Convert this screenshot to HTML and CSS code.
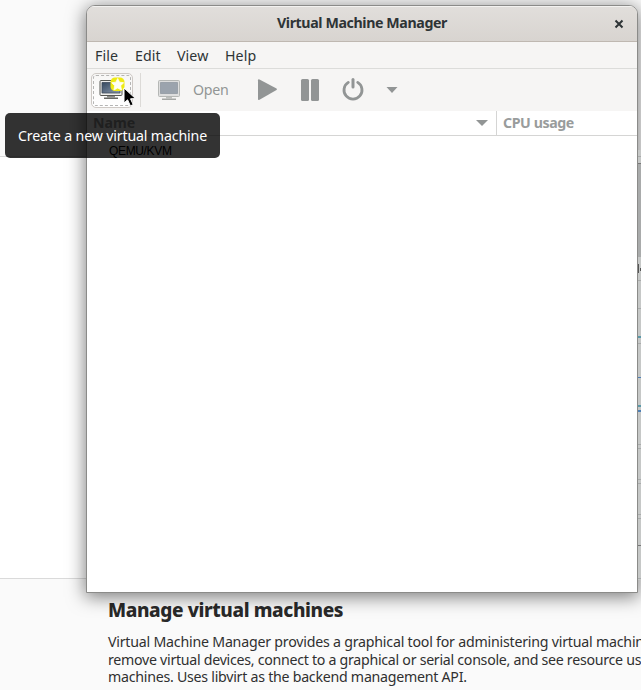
FILE: index.html
```html
<!DOCTYPE html>
<html lang="en">
<head>
<meta charset="utf-8">
<title>Virtual Machine Manager</title>
<link rel="stylesheet" href="styles.css">
</head>
<body>
<main class="page">
  <div class="band top"></div>
  <div class="band middle"></div>
  <section class="details">
    <h1>Manage virtual machines</h1>
    <p><span class="l1">Virtual Machine Manager provides a graphical tool for administering virtual machin</span><br><span class="l2">remove virtual devices, connect to a graphical or serial console, and see resource us</span><br><span class="l3">machines. Uses libvirt as the backend management API.</span></p>
  </section>
</main>
<svg class="behind" width="4" height="430" viewBox="0 0 4 430">
  <path fill="#c6c8c7" d="M0 0h4v430H0z"/>
  <path fill="#a9abab" d="M0 14h4v93H0z"/>
  <path fill="#777" d="M0 13h4v1H0zM0 395h4v1H0z"/>
  <path fill="#a9abab" d="M0 6h4v1H0zM0 130h4v1H0zM0 158h4v1H0zM0 193h4v1H0zM0 294h4v1H0zM0 298h4v1H0zM0 329h4v1H0zM0 333h4v1H0zM0 364h4v1H0zM0 368h4v1H0zM0 428h4v1H0z"/>
  <path fill="#555" d="M0 114h2v9H0zM3 118h1v3H3z"/>
  <path fill="#5b99a8" d="M0 186h4v2H0zM0 255h4v2H0z"/>
  <path fill="#4f80b5" d="M0 227h4v1H0zM0 260h4v2H0z"/>
</svg>
<div class="window">
  <header class="titlebar"><span class="title">Virtual Machine Manager</span>
    <svg class="close" width="10" height="10" viewBox="0 0 10 10"><path d="M1.5 1.5l7 7m0-7l-7 7" stroke="#2e3436" stroke-width="2"/></svg>
  </header>
  <nav class="menu"><span>File</span><span>Edit</span><span>View</span><span>Help</span></nav>
  <div class="toolbar">
    <button class="new" aria-label="New">
      <svg width="28" height="24" viewBox="0 0 28 24">
        <defs><linearGradient id="sc" x2="1" y2="1"><stop stop-color="#35485e"/><stop offset="1" stop-color="#8b9bb0"/></linearGradient></defs>
        <rect x="1" y="3.5" width="22" height="15" rx="1" fill="#eeeeec" stroke="#555753"/>
        <path fill="url(#sc)" stroke="#3d4a59" stroke-width=".8" d="M3 5.5h18v10.5h-18z"/>
        <path fill="#888a85" d="M8 19h8v1.5H8z"/><path fill="#666864" d="M5 20.5h14V22H5z"/>
        <rect x="11.5" y=".5" width="14" height="13.5" rx="4.5" fill="#eeea14"/>
        <path fill="#fffff4" stroke="#fffff4" stroke-width=".8" stroke-linejoin="round" d="M18.7 1.5l1.8 3.7 4.2.5-3 3 .8 4.3-3.8-2-3.8 2 .8-4.3-3-3 4.2-.5z"/>
      </svg>
    </button>
    <i class="separator"></i>
    <svg class="monitor" width="24" height="22" viewBox="0 0 24 22"><rect x="1.5" y="1.5" width="21" height="16" rx="1" fill="#dedede" stroke="#b5b7b5"/><path fill="#9ba3ad" stroke="#8b939c" stroke-width=".7" d="M3.5 3.5h17v11h-17z"/><path fill="#bdbfbd" d="M9 18h6v1.500H9z"/><path fill="#a5a7a5" d="M5 19.500h14V21H5z"/></svg>
    <span class="open">Open</span>
    <svg class="actions" width="146" height="24" viewBox="0 0 146 24" fill="#929595">
      <path d="M1 2.200Q1 .8 2.500 1.500l17 9q1 .8 0 1.600l-17 9.600Q1 22.500 1 21z"/>
      <rect x="44" y="1" width="8" height="22" rx="1.5"/><rect x="54" y="1" width="8" height="22" rx="1.5"/>
      <path d="M91.300 4.400a9 9 0 1 0 9.400 0" fill="none" stroke="#929595" stroke-width="2.800" stroke-linecap="round"/><path d="M96 1.500v7.500" stroke="#929595" stroke-width="3" stroke-linecap="round"/>
      <path d="M129.500 9h11l-5.500 6z"/>
    </svg>
  </div>
  <div class="columns"><span class="name">Name</span><svg width="12" height="6" viewBox="0 0 12 6"><path fill="#929595" d="M0 0h12L6 6z"/></svg><span class="cpu">CPU usage</span></div>
  <div class="rows"><span>QEMU/KVM</span></div>
</div>
<div class="tooltip"><span>Create a new virtual machine</span></div>
<svg class="cursor" width="15" height="22" viewBox="0 0 15 22"><path d="M2 1v15l3.600-3.200 2.800 6.100 2.800-1.300-2.700-5.800 5-.2z" fill="#000" stroke="#fff"/></svg>
</body>
</html>
```
FILE: styles.css
```css
* { box-sizing: border-box; }
body { margin: 0; width: 641px; height: 690px; overflow: hidden; position: relative; background: #fafafa; color: #2e3436; font: 14.2px/18px "Noto Sans", "Open Sans", sans-serif; }
.page { width: 641px; height: 690px; overflow: hidden; }
.top { height: 157px; border-bottom: 1px solid #dadada; }
.middle { height: 422px; background: #fff; border-bottom: 1px solid #dadada; }
.details { padding: 19px 0 0 108px; color: #303030; white-space: nowrap; }
h1 { margin: 0 0 11px; font-size: 19px; line-height: 24px; font-weight: 800; color: #292929; letter-spacing: -.39px; }
p { margin: 0; line-height: 17.5px; }
.l1 { letter-spacing: -.22px; }
.l2 { letter-spacing: -.28px; }
.l3 { letter-spacing: -.26px; }
.behind { position: absolute; left: 637px; top: 150px; }
.window { position: absolute; left: 86px; top: 5px; width: 552px; height: 588px; border: 1px solid #8b8b89; border-radius: 9px 9px 0 0; background: #fff; box-shadow: 0 3px 18px 1px rgba(0,0,0,.5); overflow: hidden; }
.behind { z-index: 1; clip-path: inset(0 0 0 1px); }
.titlebar { height: 36px; display: flex; align-items: center; justify-content: center; padding-left: 28px; background: linear-gradient(#e1dedb, #d8d4d0); border-top: 1px solid #f3f2f0; border-bottom: 1px solid #bfb8b1; font-weight: 700; }
.title { flex: 1; text-align: center; letter-spacing: -.39px; padding-bottom: 2px; }
.close { margin: 0 13px 0 5px; }
.menu { height: 27px; display: flex; align-items: center; gap: 16px; padding: 2px 0 0 8px; background: #f6f5f4; border-bottom: 1px solid #dcdcda; }
.menu span:nth-child(1) { width: 24px; }
.menu span:nth-child(2) { width: 26px; }
.menu span:nth-child(3) { width: 32px; }
.menu span { letter-spacing: .1px; }
.toolbar { height: 42px; background: #f6f5f4; display: flex; align-items: center; padding-left: 4px; }
.new { display: flex; width: 42px; height: 35px; padding: 3px 0 0 7px; background: linear-gradient(#f7f6f5, #fff); border: 1px solid #cec9c5; border-radius: 5px; position: relative; }
.new::after { content: ""; position: absolute; inset: 1px; border: 1px dashed #b5b5b4; border-radius: 3px; }
.separator { width: 1px; height: 34px; margin-left: 7px; background: #dcdad7; }
.monitor { margin-left: 16px; }
.open { width: 36px; margin-left: 12px; color: #929595; letter-spacing: -.25px; }
.actions { margin-left: 28px; }
.columns { height: 25px; display: flex; align-items: center; border-bottom: 1px solid #d5d5d4; color: #999c9c; font-weight: 700; }
.name { width: 389px; padding-left: 6px; }
.cpu { height: 24px; line-height: 24px; margin-left: 8px; padding-left: 6px; border-left: 1px solid #d5d5d4; letter-spacing: -.42px; }
.rows { padding: 7px 0 0 22px; color: #000; font: 12px/16px "Liberation Sans", sans-serif; letter-spacing: -.35px; }
.tooltip { position: absolute; z-index: 2; left: 5px; top: 113px; width: 215px; height: 45px; padding-left: 13px; display: flex; align-items: center; color: #fff; background: rgba(0,0,0,.8); border-radius: 5px; white-space: nowrap; }
.tooltip span { letter-spacing: -.16px; }
.cursor { position: absolute; z-index: 3; left: 122px; top: 87px; }
```
